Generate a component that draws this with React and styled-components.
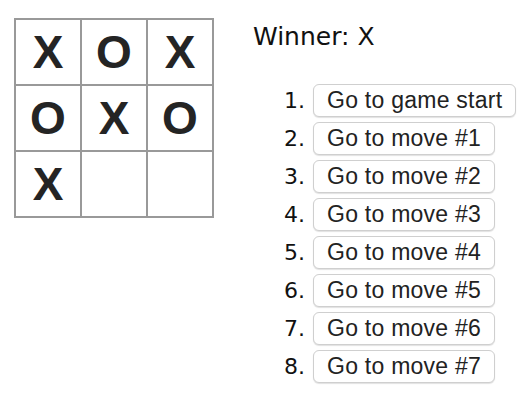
import React from "react";
import styled, { createGlobalStyle } from "styled-components";

const Global = createGlobalStyle`
  html, body { margin: 0; padding: 0; background: #fff; }
  body { font-family: "DejaVu Sans", "Lato", sans-serif; color: #111; }
`;

const Game = styled.div`
  display: flex;
  align-items: flex-start;
  padding: 18px 0 18px 14px;
`;

const Board = styled.div`
  flex-shrink: 0;
  display: grid;
  grid-template-columns: repeat(3, 64px);
  grid-auto-rows: 64px;
  gap: 2px;
  padding: 2px;
  background: #999;
`;

const Square = styled.div`
  background: #fff;
  display: flex;
  align-items: center;
  justify-content: center;
  font-family: "Liberation Sans", Arial, sans-serif;
  font-weight: bold;
  font-size: 46px;
  color: #242424;
`;

const Info = styled.div`
  margin-left: 39px;
  display: flex;
  flex-direction: column;
  flex-shrink: 0;
`;

const Status = styled.div`
  font-size: 25px;
  line-height: 30px;
  margin-top: 4px;
`;

const Moves = styled.ol`
  list-style: none;
  margin: 32px 0 0;
  padding: 0;
  display: flex;
  flex-direction: column;
  gap: 5px;
`;

const Move = styled.li`
  display: flex;
  align-items: center;
  gap: 8px;
`;

const Num = styled.span`
  width: 52px;
  flex-shrink: 0;
  text-align: right;
  font-size: 22px;
  line-height: 26px;
`;

const Button = styled.button`
  height: 33px;
  padding: 0 13px;
  white-space: nowrap;
  flex-shrink: 0;
  background: #fff;
  border: 1px solid #cfcfcf;
  border-radius: 6px;
  box-shadow: 0 1px 1px rgba(0, 0, 0, 0.12);
  font-family: "Liberation Sans", Arial, sans-serif;
  font-size: 23px;
  letter-spacing: 0.25px;
  color: #222;
  cursor: pointer;
`;

const squares = ["X", "O", "X", "O", "X", "O", "X", null, null];

export default function App() {
  const moves = Array.from({ length: 8 }, (_, i) =>
    i === 0 ? "Go to game start" : `Go to move #${i}`
  );
  return (
    <>
      <Global />
      <Game>
        <Board>
          {squares.map((s, i) => (
            <Square key={i}>{s}</Square>
          ))}
        </Board>
        <Info>
          <Status>Winner: X</Status>
          <Moves>
            {moves.map((m, i) => (
              <Move key={i}>
                <Num>{i + 1}.</Num>
                <Button>{m}</Button>
              </Move>
            ))}
          </Moves>
        </Info>
      </Game>
    </>
  );
}
